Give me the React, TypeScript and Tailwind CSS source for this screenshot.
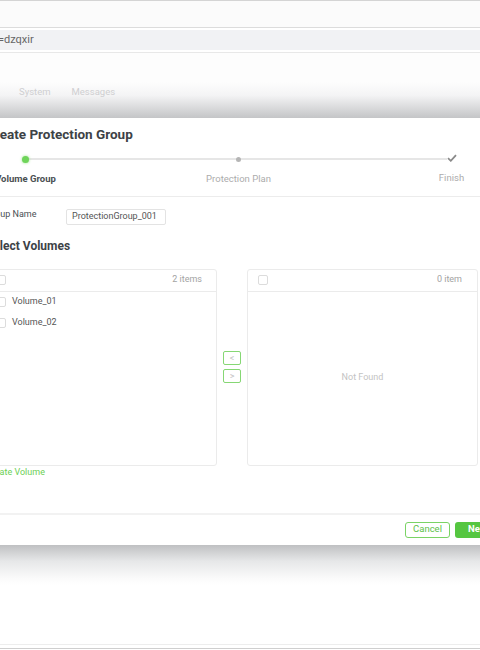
import React from "react";

const Check = () => (
  <span className="inline-block w-[10px] h-[10px] border border-[#dcdcdc] rounded-[2px] bg-white shrink-0" />
);

export default function App() {
  return (
    <div className="w-[480px] h-[650px] overflow-hidden bg-white flex flex-col" style={{ fontFamily: "Roboto, 'Liberation Sans', sans-serif" }}>
      <div className="h-px bg-[#d4d4d4] shrink-0" />
      <div className="h-[26px] bg-[#fbfbfb] shrink-0" />
      <div className="h-px bg-[#dcdcdc] shrink-0" />
      <div className="h-[2px] bg-white shrink-0" />
      <div className="h-[20px] bg-[#f1f2f4] shrink-0 flex items-center text-[11px] text-[#666] ml-[-2px]">=dzqxir</div>
      <div className="h-[2px] bg-white shrink-0" />
      <div className="h-px bg-[#e8e8e8] shrink-0" />
      <div className="h-[65px] shrink-0 bg-[linear-gradient(to_bottom,#fdfdfd_0%,#fdfdfd_45%,#f4f4f5_65%,#c4c5c7_100%)] flex items-start pt-[33px] pl-[19px] gap-[21px] text-[9.5px] leading-[12px] text-[#cfcfd1]">
        <span>System</span>
        <span>Messages</span>
      </div>

      {/* Dialog */}
      <div className="shrink-0 ml-[-34px] w-[560px] bg-white px-5 flex flex-col">
        <div className="pt-[7px] text-[13.5px] leading-[18px] font-bold text-[#3d4246]">Create Protection Group</div>

        {/* Stepper */}
        <div className="relative ml-[-67px] w-[639px] mt-[13px] flex">
          <div className="absolute left-[107px] right-[107px] top-[2px] h-[2px] bg-[#e6e6e6]" />
          <div className="w-[213px] flex flex-col items-center relative">
            <div className="w-[7px] h-[7px] mt-[-0.5px] rounded-full bg-[#6fd45a] shadow-[0_0_3px_#9be58a]" />
            <div className="mt-[9px] text-[9.5px] leading-[14px] font-bold text-[#4a4f53]">Volume Group</div>
          </div>
          <div className="w-[213px] flex flex-col items-center relative">
            <div className="w-[5px] h-[5px] mt-[0.5px] rounded-full bg-[#b5b5b5]" />
            <div className="mt-[10px] text-[9.5px] leading-[14px] text-[#acacac]">Protection Plan</div>
          </div>
          <div className="w-[213px] flex flex-col items-center relative">
            <svg width="10" height="8" viewBox="0 0 10 8" className="mt-[-2px] bg-white">
              <path d="M1 4.2 L3.8 6.8 L9 1.2" fill="none" stroke="#8a8a8a" strokeWidth="1.8" />
            </svg>
            <div className="mt-[9px] text-[9.5px] leading-[14px] text-[#acacac]">Finish</div>
          </div>
        </div>

        <div className="mt-[10px] h-px bg-[#ececec] mx-[-20px]" />

        {/* Group name */}
        <div className="mt-[12px] flex items-start">
          <div className="w-[80px] text-[9px] leading-[10px] text-[#4a4f53]">Group Name</div>
          <div className="w-[100px] h-[16px] border border-[#e3e3e3] rounded-[2px] flex items-center px-[5px] text-[9px] text-[#555]">ProtectionGroup_001</div>
        </div>

        <div className="mt-[13px] text-[12px] leading-[16px] font-bold text-[#3d4246]">Select Volumes</div>

        {/* Transfer */}
        <div className="mt-[15px] flex w-[492px] h-[197px]">
          <div className="w-[231px] border border-[#ebebeb] rounded-[3px] flex flex-col">
            <div className="h-[22px] border-b border-[#ebebeb] flex items-center justify-between pl-[9px] pr-[14px] shrink-0">
              <Check />
              <span className="text-[9px] text-[#a3a3a3]">2 items</span>
            </div>
            <div className="flex flex-col">
              {["Volume_01", "Volume_02"].map((v) => (
                <div key={v} className="h-[21px] flex items-center pl-[9px] gap-[6px] text-[9px] text-[#555]">
                  <Check />
                  <span>{v}</span>
                </div>
              ))}
            </div>
          </div>
          <div className="w-[30px] flex flex-col items-center justify-center gap-[4px]">
            <div className="w-[18px] h-[14px] border border-[#86d774] rounded-[2px] flex items-center justify-center text-[9px] leading-[9px] text-[#c4c4c4]">&lt;</div>
            <div className="w-[18px] h-[14px] border border-[#86d774] rounded-[2px] flex items-center justify-center text-[9px] leading-[9px] text-[#c4c4c4]">&gt;</div>
          </div>
          <div className="w-[231px] border border-[#ebebeb] rounded-[3px] flex flex-col">
            <div className="h-[22px] border-b border-[#ebebeb] flex items-center justify-between pl-[10px] pr-[15px] shrink-0">
              <Check />
              <span className="text-[9px] text-[#a3a3a3]">0 item</span>
            </div>
            <div className="flex-1 flex items-center justify-center text-[9px] text-[#c3c3c3]">Not Found</div>
          </div>
        </div>

        <div className="mt-[1px] text-[9px] leading-[10px] text-[#6ccf55]">Create Volume</div>

        <div className="mt-[36px] h-[2px] bg-[#f2f2f2] mx-[-20px]" />

        <div className="mt-[7px] mb-[7px] flex justify-end pr-[5px] gap-[5px]">
          <div className="w-[45px] h-[16px] border border-[#7ad365] rounded-[3px] flex items-center justify-center text-[9.5px] text-[#5cbf48]">Cancel</div>
          <div className="w-[46px] h-[16px] bg-[#55c641] rounded-[3px] flex items-center justify-center text-[9.5px] font-bold text-white">Next</div>
        </div>
      </div>

      <div className="h-[40px] shrink-0 bg-[linear-gradient(to_bottom,#bfc0c2_0%,#e6e7e8_40%,#fbfbfb_85%,#ffffff_100%)]" />
      <div className="flex-1 bg-white" />
      <div className="h-px bg-[#ededed] shrink-0" />
      <div className="h-[3px] bg-white shrink-0" />
      <div className="h-px bg-[#cfcfcf] shrink-0" />
      <div className="h-px bg-white shrink-0" />
    </div>
  );
}
